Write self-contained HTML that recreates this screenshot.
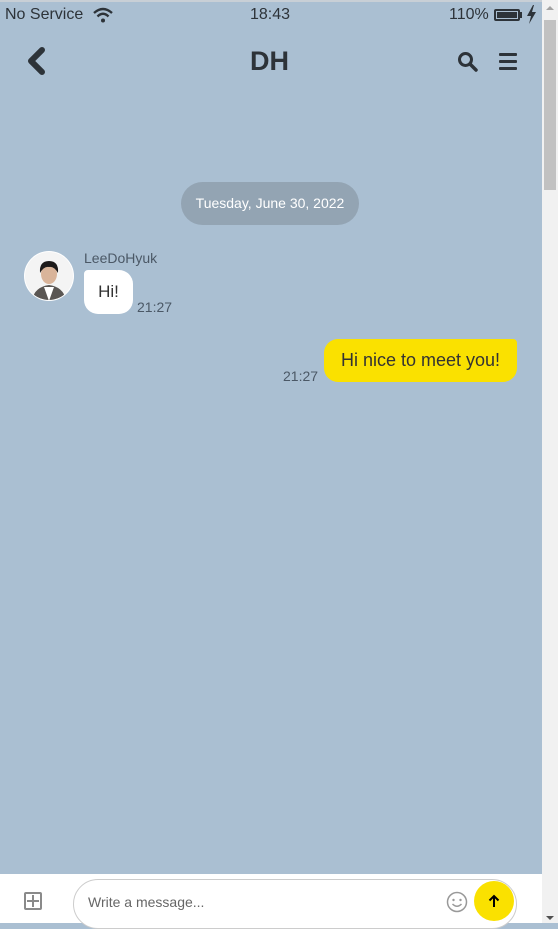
<!DOCTYPE html>
<html><head><meta charset="utf-8"><style>
*{margin:0;padding:0;box-sizing:border-box}
body{width:558px;height:923px;overflow:hidden;background:#aabfd2;font-family:"Liberation Sans",sans-serif;position:relative;color:#2d3339}
.a{position:absolute}
</style></head><body>
<div class="a" style="left:0;top:0;width:542px;height:2px;background:#c8cfd6"></div>
<div class="a" style="left:5px;top:6px;font-size:16px;color:#2d3339">No Service</div>
<svg class="a" style="left:93px;top:7px" width="20" height="16" viewBox="0 0 20 16"><path d="M1 6 Q10 -2 19 6" stroke="#2d3339" stroke-width="2.4" fill="none"/><path d="M4.5 9.5 Q10 4 15.5 9.5" stroke="#2d3339" stroke-width="2.4" fill="none"/><circle cx="10" cy="13.5" r="2" fill="#2d3339"/></svg>
<div class="a" style="left:250px;top:6px;font-size:16px">18:43</div>
<div class="a" style="left:449px;top:6px;font-size:16px">110%</div>
<div class="a" style="left:494px;top:9px;width:26px;height:12px;border:2px solid #2d3339;border-radius:2px;padding:1px"><div style="width:100%;height:100%;background:#2d3339"></div></div>
<div class="a" style="left:520px;top:12px;width:2px;height:6px;background:#2d3339"></div>
<svg class="a" style="left:526px;top:5px" width="11" height="19" viewBox="0 0 11 19"><path d="M7 0 L1 11 H5 L3 19 L10 7 H6 L8 0Z" fill="#2d3339"/></svg>
<svg class="a" style="left:25px;top:46px" width="22" height="30" viewBox="0 0 22 30"><path d="M17 4 L6 15 L17 26" stroke="#2d3339" stroke-width="6" fill="none" stroke-linecap="round" stroke-linejoin="round"/></svg>
<div class="a" style="left:250px;top:46px;font-size:27px;font-weight:bold;color:#2d3339">DH</div>
<svg class="a" style="left:457px;top:51px" width="22" height="22" viewBox="0 0 22 22"><circle cx="8.5" cy="8.5" r="6" stroke="#2d3339" stroke-width="3" fill="none"/><path d="M13 13 L19 19" stroke="#2d3339" stroke-width="3.5" stroke-linecap="round"/></svg>
<div class="a" style="left:499px;top:53px;width:18px;height:3px;background:#2d3339;border-radius:1px"></div>
<div class="a" style="left:499px;top:60px;width:18px;height:3px;background:#2d3339;border-radius:1px"></div>
<div class="a" style="left:499px;top:67px;width:18px;height:3px;background:#2d3339;border-radius:1px"></div>
<div class="a" style="left:181px;top:182px;width:178px;height:43px;border-radius:22px;background:#93a4b3;color:#fff;font-size:14px;text-align:center;line-height:43px">Tuesday, June 30, 2022</div>
<svg class="a" style="left:24px;top:251px" width="50" height="50" viewBox="0 0 50 50"><defs><clipPath id="c"><circle cx="25" cy="25" r="24"/></clipPath></defs><circle cx="25" cy="25" r="25" fill="#fff"/><g clip-path="url(#c)"><rect width="50" height="50" fill="#f4f4f4"/><path d="M8 50 Q10 36 25 34 Q40 36 42 50Z" fill="#5a5653"/><path d="M20 36 L25 50 L30 36Z" fill="#fff"/><ellipse cx="25" cy="23" rx="8" ry="10" fill="#d9b49a"/><path d="M16 22 Q15 10 25 10 Q35 10 34 22 Q30 15 25 16 Q20 15 16 22Z" fill="#1c1a1a"/></g></svg>
<div class="a" style="left:84px;top:250px;font-size:14px;color:#4b5866">LeeDoHyuk</div>
<div class="a" style="left:84px;top:270px;width:49px;height:44px;background:#fff;border-radius:4px 14px 14px 14px;font-size:17px;line-height:44px;text-align:center;color:#333">Hi!</div>
<div class="a" style="left:137px;top:299px;font-size:14px;color:#4b5866">21:27</div>
<div class="a" style="left:283px;top:368px;font-size:14px;color:#4b5866">21:27</div>
<div class="a" style="left:324px;top:339px;width:193px;height:43px;background:#fae100;border-radius:14px 4px 14px 14px;font-size:18px;line-height:43px;text-align:center;color:#333">Hi nice to meet you!</div>
<div class="a" style="left:0;top:874px;width:542px;height:49px;background:#fff"></div>
<div class="a" style="left:24px;top:892px;width:18px;height:18px;border:2px solid #8a8a8a;border-radius:2px"></div>
<div class="a" style="left:32px;top:895px;width:2px;height:12px;background:#8a8a8a"></div>
<div class="a" style="left:27px;top:900px;width:12px;height:2px;background:#8a8a8a"></div>
<div class="a" style="left:73px;top:879px;width:444px;height:50px;border:1px solid #ccc;border-radius:25px;background:#fff"></div>
<div class="a" style="left:88px;top:894px;font-size:14px;color:#666">Write a message...</div>
<svg class="a" style="left:446px;top:891px" width="22" height="22" viewBox="0 0 22 22"><circle cx="11" cy="11" r="9.5" stroke="#999" stroke-width="1.5" fill="none"/><circle cx="7.5" cy="9" r="1.2" fill="#999"/><circle cx="14.5" cy="9" r="1.2" fill="#999"/><path d="M6.5 13 Q11 17.5 15.5 13" stroke="#999" stroke-width="1.5" fill="none"/></svg>
<div class="a" style="left:474px;top:881px;width:40px;height:40px;border-radius:50%;background:#fae100"></div>
<svg class="a" style="left:486px;top:893px" width="16" height="16" viewBox="0 0 16 16"><path d="M8 14 V3 M3.5 7.5 L8 3 L12.5 7.5" stroke="#000" stroke-width="2" fill="none"/></svg>
<div class="a" style="left:542px;top:0;width:16px;height:923px;background:#f1f1f1"></div>
<div class="a" style="left:544px;top:20px;width:12px;height:170px;background:#c1c1c1"></div>
<div class="a" style="left:546px;top:6px;width:0;height:0;border-left:4px solid transparent;border-right:4px solid transparent;border-bottom:4px solid #a3a3a3"></div>
<div class="a" style="left:546px;top:916px;width:0;height:0;border-left:4px solid transparent;border-right:4px solid transparent;border-top:4px solid #505050"></div>
</body></html>
